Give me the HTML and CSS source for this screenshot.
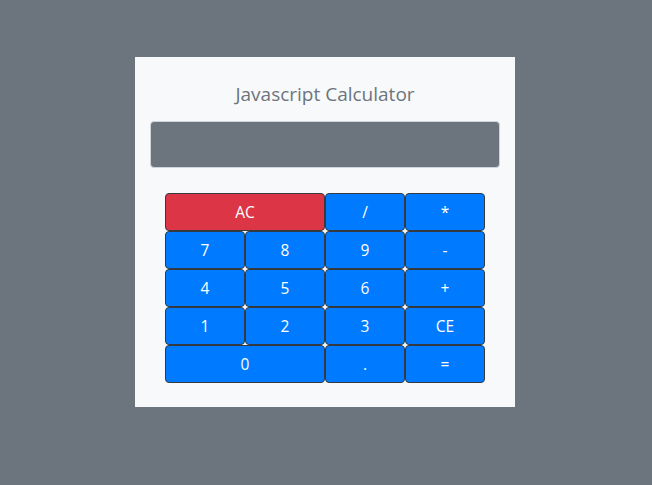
FILE: index.html
```html
<!DOCTYPE html>
<html>
<head>
<meta charset="utf-8">
<link rel="stylesheet" href="styles.css">
</head>
<body>
<div class="card">
  <h1 class="title">Javascript Calculator</h1>
  <div class="display"></div>
  <div class="keys">
    <button class="key danger wide">AC</button>
    <button class="key">/</button>
    <button class="key">*</button>
    <button class="key">7</button>
    <button class="key">8</button>
    <button class="key">9</button>
    <button class="key">-</button>
    <button class="key">4</button>
    <button class="key">5</button>
    <button class="key">6</button>
    <button class="key">+</button>
    <button class="key">1</button>
    <button class="key">2</button>
    <button class="key">3</button>
    <button class="key">CE</button>
    <button class="key wide">0</button>
    <button class="key">.</button>
    <button class="key">=</button>
  </div>
</div>
</body>
</html>
```
FILE: styles.css
```css
html, body {
  margin: 0;
  padding: 0;
  background: #6c757d;
  font-family: "Open Sans", "Noto Sans", sans-serif;
}
body {
  display: flex;
  justify-content: flex-start;
  padding: 57px 0 0 135px;
  height: 485px;
  box-sizing: border-box;
}
.card {
  width: 380px;
  height: 350px;
  box-sizing: border-box;
  background: #f8f9fa;
  padding: 15px 15px 0 15px;
  display: flex;
  flex-direction: column;
  align-items: center;
}
.title {
  margin: 8px 0 0 0;
  font-size: 19px;
  font-weight: 400;
  line-height: 28px;
  color: #6c757d;
  height: 41px;
}
.display {
  width: 350px;
  height: 47px;
  box-sizing: border-box;
  background: #6c757d;
  border: 1px solid #ced4da;
  border-radius: 4px;
}
.keys {
  margin-top: 25px;
  display: grid;
  grid-template-columns: repeat(4, 80px);
  grid-auto-rows: 38px;
}
.key {
  margin: 0;
  padding: 2px 0 0 0;
  border: 1px solid #343a40;
  border-radius: 4px;
  background: #007bff;
  color: #fff;
  font-family: "Open Sans", "Noto Sans", sans-serif;
  font-size: 15.5px;
  line-height: 1;
}
.key.wide {
  grid-column: span 2;
}
.key.danger {
  background: #dc3545;
}
```
